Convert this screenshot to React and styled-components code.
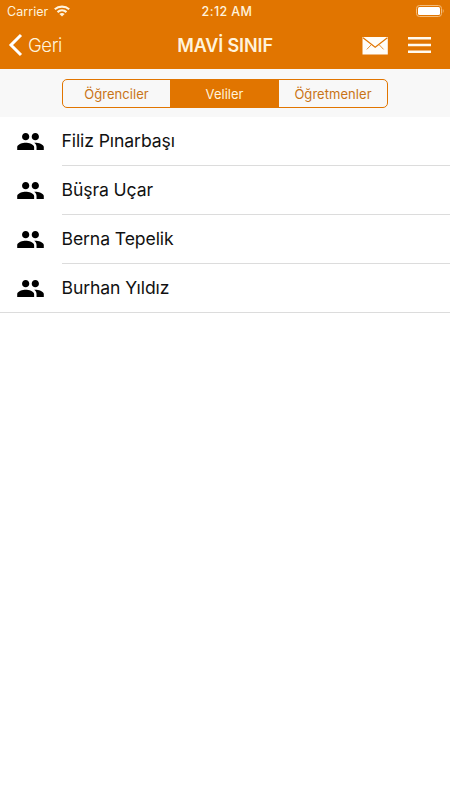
import React, { useState } from "react"
import styled, { createGlobalStyle } from "styled-components"
import { MdPeople } from "react-icons/md"

const colors = {
  primary: "#e17500",
  cream: "#fff3dc",
  bar: "#f8f8f8",
  line: "#dcdcdc",
  text: "#111",
}

const GlobalStyle = createGlobalStyle`
  * {
    box-sizing: border-box;
  }
  body {
    margin: 0;
    background: #fff;
    color: ${colors.text};
    font-family: Inter, "Liberation Sans", sans-serif;
  }
`
const Screen = styled.div`
  width: 100%;
  min-height: 800px;
`
const Header = styled.header`
  height: 69px;
  background: ${colors.primary};
  color: ${colors.cream};
`
const StatusBar = styled.div`
  display: grid;
  grid-template-columns: 1fr auto 1fr;
  align-items: center;
  height: 22px;
  padding: 0 6px 0 7px;
  font-size: 12.5px;
`
const Carrier = styled.span`
  display: flex;
  align-items: center;
  gap: 6px;
  letter-spacing: 0.05px;
`
const Clock = styled.span`
  padding-left: 3px;
  font-weight: 500;
  letter-spacing: 0.4px;
`
const BatteryIcon = styled.svg`
  justify-self: end;
`
const NavBar = styled.nav`
  display: grid;
  grid-template-columns: 1fr auto 1fr;
  align-items: center;
  height: 46px;
  padding: 0 8px;
`
const BackButton = styled.button`
  display: flex;
  align-items: center;
  gap: 5px;
  padding: 0;
  border: 0;
  background: none;
  color: inherit;
  font: 300 18.5px Inter, sans-serif;
  letter-spacing: -0.4px;
`
const Title = styled.h1`
  margin: 0;
  padding-top: 2px;
  font-size: 18px;
  font-weight: 600;
  line-height: 24px;
  letter-spacing: -0.12px;
`
const Actions = styled.div`
  display: flex;
  align-items: center;
  justify-content: flex-end;
  gap: 20px;
  margin-right: 11px;
`
const Toolbar = styled.div`
  display: flex;
  justify-content: center;
  height: 48px;
  padding-top: 10px;
  background: ${colors.bar};
`
const Segments = styled.div`
  display: grid;
  grid-template-columns: 107px 109px 108px;
  width: 326px;
  height: 29px;
  border: 1px solid ${colors.primary};
  border-radius: 5px;
  overflow: hidden;
`
const Segment = styled.button`
  padding: 0;
  border: 0;
  background: ${({ $active }) => ($active ? colors.primary : "transparent")};
  color: ${({ $active }) => ($active ? colors.cream : "#c97416")};
  font: 400 13px Inter, sans-serif;
  letter-spacing: ${({ $active }) => ($active ? "0" : "0.05px")};
`
const List = styled.ul`
  margin: 0;
  padding: 0;
  list-style: none;
  border-bottom: 1px solid ${colors.line};
`
const Row = styled.li`
  display: flex;
  height: 49px;
  padding-left: 16px;
  &:last-child {
    height: 48px;
  }
`
const PersonIcon = styled(MdPeople)`
  flex: none;
  width: 29px;
  height: 29px;
  margin: 9.5px 16.5px 0 0;
  color: #000;
`
const Name = styled.span`
  flex: 1;
  font-size: 17.6px;
  line-height: 48px;
  letter-spacing: -0.1px;
  ${Row}:not(:last-child) & {
    border-bottom: 1px solid ${colors.line};
  }
`

const tabs = ["Öğrenciler", "Veliler", "Öğretmenler"]
const parents = ["Filiz Pınarbaşı", "Büşra Uçar", "Berna Tepelik", "Burhan Yıldız"]

const Wifi = () => (
  <svg width="16" height="12" viewBox="0 0 16 12" fill="none" stroke={colors.cream} strokeWidth="2.1">
    <path d="M.8 4.3C4.8.7 11.2.7 15.2 4.3M3.5 7.1c2.6-2.3 6.4-2.3 9 0" />
    <path d="M8 11.4 5.4 8.9c1.4-1.2 3.8-1.2 5.2 0z" fill={colors.cream} stroke="none" />
  </svg>
)

const Battery = () => (
  <BatteryIcon width="28" height="12" viewBox="0 0 28 12">
    <rect x=".5" y=".5" width="25" height="11" rx="3" fill="none" stroke="#f4bd7c" />
    <rect x="2" y="2" width="22" height="8" rx="1.5" fill="#fff" />
    <path d="M26.8 4v4c1-.5 1.2-3.5 0-4z" fill="#f4bd7c" />
  </BatteryIcon>
)

const Chevron = () => (
  <svg width="15" height="24" viewBox="0 0 15 24" fill="none" stroke="#fff" strokeWidth="3">
    <path d="M13 2 3 12l10 10" />
  </svg>
)

const Mail = () => (
  <svg width="26" height="20" viewBox="0 0 26 20">
    <path d="M.5 2h25.3v17.5H.5z" fill="#fffdf8" />
    <path d="m1 2.8 12.2 9.4L25.4 2.8" fill="none" stroke={colors.primary} strokeWidth="1.2" />
    <path d="m9 10-4.2 4.4M17.4 10l4.2 4.4" fill="none" stroke={colors.primary} strokeWidth=".8" />
  </svg>
)

const Menu = () => (
  <svg width="23" height="16" viewBox="0 0 23 16" fill="#fffaf0">
    <path d="M0 0h23v2.6H0zM0 6.7h23v2.6H0zM0 13.4h23V16H0z" />
  </svg>
)

const App = () => {
  const [active, setActive] = useState("Veliler")

  return (
    <Screen>
      <GlobalStyle />
      <Header>
        <StatusBar>
          <Carrier>
            Carrier <Wifi />
          </Carrier>
          <Clock>2:12 AM</Clock>
          <Battery />
        </StatusBar>
        <NavBar>
          <BackButton>
            <Chevron /> Geri
          </BackButton>
          <Title>MAVİ SINIF</Title>
          <Actions>
            <Mail />
            <Menu />
          </Actions>
        </NavBar>
      </Header>
      <Toolbar>
        <Segments>
          {tabs.map(tab => (
            <Segment key={tab} $active={tab === active} onClick={() => setActive(tab)}>
              {tab}
            </Segment>
          ))}
        </Segments>
      </Toolbar>
      <List>
        {parents.map(name => (
          <Row key={name}>
            <PersonIcon />
            <Name>{name}</Name>
          </Row>
        ))}
      </List>
    </Screen>
  )
}

export default App
